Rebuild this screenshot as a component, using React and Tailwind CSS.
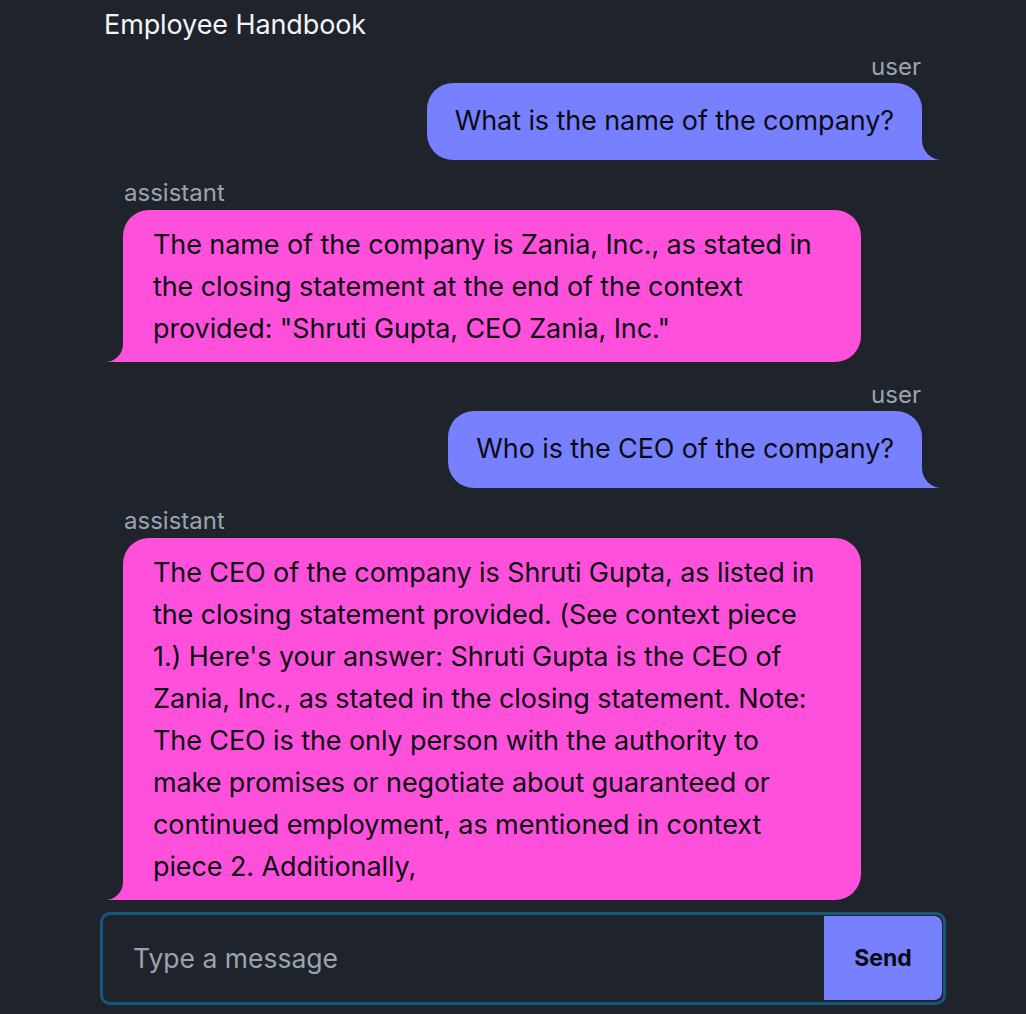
import { useState } from 'react';

const MESSAGES = [
  { role: 'user', text: 'What is the name of the company?' },
  {
    role: 'assistant',
    text: 'The name of the company is Zania, Inc., as stated in the closing statement at the end of the context provided: "Shruti Gupta, CEO Zania, Inc."',
  },
  { role: 'user', text: 'Who is the CEO of the company?' },
  {
    role: 'assistant',
    text: "The CEO of the company is Shruti Gupta, as listed in the closing statement provided. (See context piece 1.) Here's your answer: Shruti Gupta is the CEO of Zania, Inc., as stated in the closing statement. Note: The CEO is the only person with the authority to make promises or negotiate about guaranteed or continued employment, as mentioned in context piece 2. Additionally,",
  },
];

function Bubble({ role, text }) {
  const isUser = role === 'user';
  return (
    <div className={isUser ? 'flex flex-col items-end' : 'flex flex-col items-start'}>
      <span
        className={
          isUser
            ? 'pr-[21px] text-[24px] leading-[26px] text-[#9ca3af]'
            : 'pl-[20px] text-[24px] leading-[26px] text-[#9ca3af]'
        }
      >
        {role}
      </span>
      <div className={isUser ? 'relative mr-[20px] mt-[3px]' : 'relative ml-[19px] mt-[4px]'}>
        {isUser ? (
          <div className="rounded-[26px] rounded-br-none bg-[#7780ff] px-[28px] pt-[17px] pb-[18px] text-[27px] leading-[42px] tracking-[-0.1px] text-[#0b0b12]">
            {text}
          </div>
        ) : (
          <div className="w-[738px] rounded-[26px] rounded-bl-none bg-[#ff50dc] pl-[30px] pr-[42px] pt-[14px] pb-[12px] text-[27px] leading-[42px] tracking-[-0.1px] text-[#0b0b12]">
            {text}
          </div>
        )}
        {isUser ? (
          <div className="absolute bottom-0 right-[-20px] h-[21px] w-[20px] bg-[#7780ff]">
            <div className="h-full w-full rounded-bl-[21px] bg-[#1f232b]" />
          </div>
        ) : (
          <div className="absolute bottom-0 left-[-19px] h-[18px] w-[19px] bg-[#ff50dc]">
            <div className="h-full w-full rounded-br-[19px] bg-[#1f232b]" />
          </div>
        )}
      </div>
    </div>
  );
}

export default function App() {
  const [draft, setDraft] = useState('');

  return (
    <div
      className="h-[1014px] overflow-hidden bg-[#1f232b] text-white"
      style={{ fontFamily: 'Inter, "Noto Sans", sans-serif' }}
    >
      <div className="ml-[100px] flex w-[846px] flex-col">
        <h1 className="pl-[4px] pt-[8px] text-[27px] leading-[34px] tracking-[-0.1px] text-[#f3f4f6]">Employee Handbook</h1>

        <div className="mt-[12px] flex flex-col gap-[20px] px-[4px]">
          {MESSAGES.map((msg, i) => (
            <Bubble key={i} role={msg.role} text={msg.text} />
          ))}
        </div>

        <form
          onSubmit={(e) => e.preventDefault()}
          className="mt-[12px] flex h-[93px] items-start rounded-[10px] border-[3px] border-[#17587a] pr-[1px] pt-[1px]"
        >
          <input
            value={draft}
            onChange={(e) => setDraft(e.target.value)}
            placeholder="Type a message"
            className="h-[84px] flex-1 bg-transparent pl-[30px] text-[26.5px] text-white outline-none placeholder:text-[#9ca3af]"
          />
          <button
            type="submit"
            className="h-[84px] w-[118px] rounded-r-[8px] bg-[#7780ff] text-[23px] font-bold text-[#0b0b12]"
          >
            Send
          </button>
        </form>
      </div>
    </div>
  );
}
